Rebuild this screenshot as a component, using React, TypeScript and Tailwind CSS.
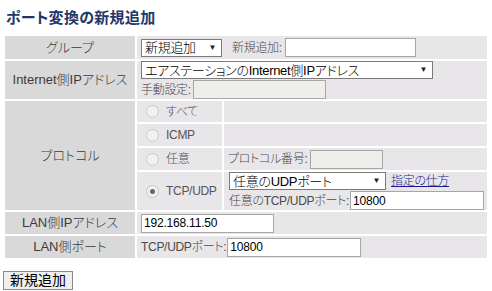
import React from "react";

const FONT = {
  fontFamily: '"Liberation Sans", "Noto Sans CJK JP", sans-serif',
  fontFeatureSettings: '"palt"',
};

function FakeSelect({ text, w }: { text: string; w: string }) {
  return (
    <div
      className={`flex items-center justify-between h-[18px] border border-[#7a7a7a] bg-white pl-[3px] pr-[5px] text-[13px] leading-none text-black ${w}`}
    >
      <span className="whitespace-nowrap">{text}</span>
      <span className="text-[8px] text-[#222]">▼</span>
    </div>
  );
}

function Input({ value, w, disabled }: { value?: string; w: string; disabled?: boolean }) {
  return (
    <div
      className={`flex items-center h-[19px] border border-[#a6a6a6] pl-[2px] text-[12px] tracking-[-0.2px] leading-none text-black ${w} ${
        disabled ? "bg-[#f0eeeb]" : "bg-white"
      }`}
    >
      {value}
    </div>
  );
}

function Radio({ checked }: { checked?: boolean }) {
  return (
    <span className="flex shrink-0 items-center justify-center w-[13px] h-[13px] rounded-full border border-[#c8c8c8] bg-[#f1f1f1]">
      {checked && <span className="w-[5px] h-[5px] rounded-full bg-[#666]" />}
    </span>
  );
}

const label = "bg-[#d9d9d9] flex items-center justify-center text-[13px] font-light text-[#3a3a3a]";
const val = "bg-[#e8e6e9] flex items-center pl-[4px] text-[12px] font-light tracking-[-0.3px] text-[#4a4a4a]";

export default function App() {
  return (
    <div className="w-[492px] h-[291px] bg-white" style={FONT}>
      <div className="pl-[6px] pt-[8px] h-[36px] text-[15px] font-bold text-[#22366a] leading-[20px] tracking-[0.3px]">
        ポート変換の新規追加
      </div>
      <div className="ml-[5px] w-[482px] grid grid-cols-[130px_85px_263px] grid-rows-[23px_38px_21px_22px_22px_38px_22px_22px] gap-[2px]">
        <div className={label}>グループ</div>
        <div className={`${val} col-span-2`}>
          <FakeSelect text="新規追加" w="w-[81px]" />
          <span className="ml-[10px] whitespace-nowrap">新規追加:</span>
          <span className="ml-[3px]">
            <Input w="w-[131px]" />
          </span>
        </div>

        <div className={label}>Internet側IPアドレス</div>
        <div className={`${val} col-span-2 flex-col !items-start justify-center gap-[1px]`}>
          <FakeSelect text="エアステーションのInternet側IPアドレス" w="w-[292px]" />
          <div className="flex items-center">
            <span className="whitespace-nowrap">手動設定:</span>
            <span className="ml-[2px]">
              <Input w="w-[133px]" disabled />
            </span>
          </div>
        </div>

        <div className={`${label} row-span-4`}>プロトコル</div>
        <div className={`${val} pl-[9px] gap-[7px]`}>
          <Radio />
          <span className="text-[#555]">すべて</span>
        </div>
        <div className={val}></div>
        <div className={`${val} pl-[9px] gap-[7px]`}>
          <Radio />
          <span className="text-[#555]">ICMP</span>
        </div>
        <div className={val}></div>
        <div className={`${val} pl-[9px] gap-[7px]`}>
          <Radio />
          <span className="text-[#555]">任意</span>
        </div>
        <div className={`${val} pl-[3px]`}>
          <span className="whitespace-nowrap">プロトコル番号:</span>
          <span className="ml-[2px]">
            <Input w="w-[73px]" disabled />
          </span>
        </div>
        <div className={`${val} pl-[9px] gap-[7px]`}>
          <Radio checked />
          <span className="text-[#555]">TCP/UDP</span>
        </div>
        <div className={`${val} pl-[5px] flex-col !items-start justify-center gap-[1px]`}>
          <div className="flex items-center">
            <FakeSelect text="任意のUDPポート" w="w-[157px]" />
            <a className="ml-[5px] text-[12px] text-[#1a1a8e] underline whitespace-nowrap">指定の仕方</a>
          </div>
          <div className="flex items-center">
            <span className="whitespace-nowrap">任意のTCP/UDPポート:</span>
            <span className="ml-[1px]">
              <Input value="10800" w="w-[134px]" />
            </span>
          </div>
        </div>

        <div className={label}>LAN側IPアドレス</div>
        <div className={`${val} col-span-2`}>
          <Input value="192.168.11.50" w="w-[133px]" />
        </div>

        <div className={label}>LAN側ポート</div>
        <div className={`${val} col-span-2`}>
          <span className="whitespace-nowrap">TCP/UDPポート:</span>
          <span className="ml-[1px]">
            <Input value="10800" w="w-[134px]" />
          </span>
        </div>
      </div>
      <div className="pl-[3px] pt-[10px]">
        <button className="h-[19px] w-[70px] border border-[#8a8a8a] bg-[#efefef] text-[14px] leading-none text-black">
          新規追加
        </button>
      </div>
    </div>
  );
}
